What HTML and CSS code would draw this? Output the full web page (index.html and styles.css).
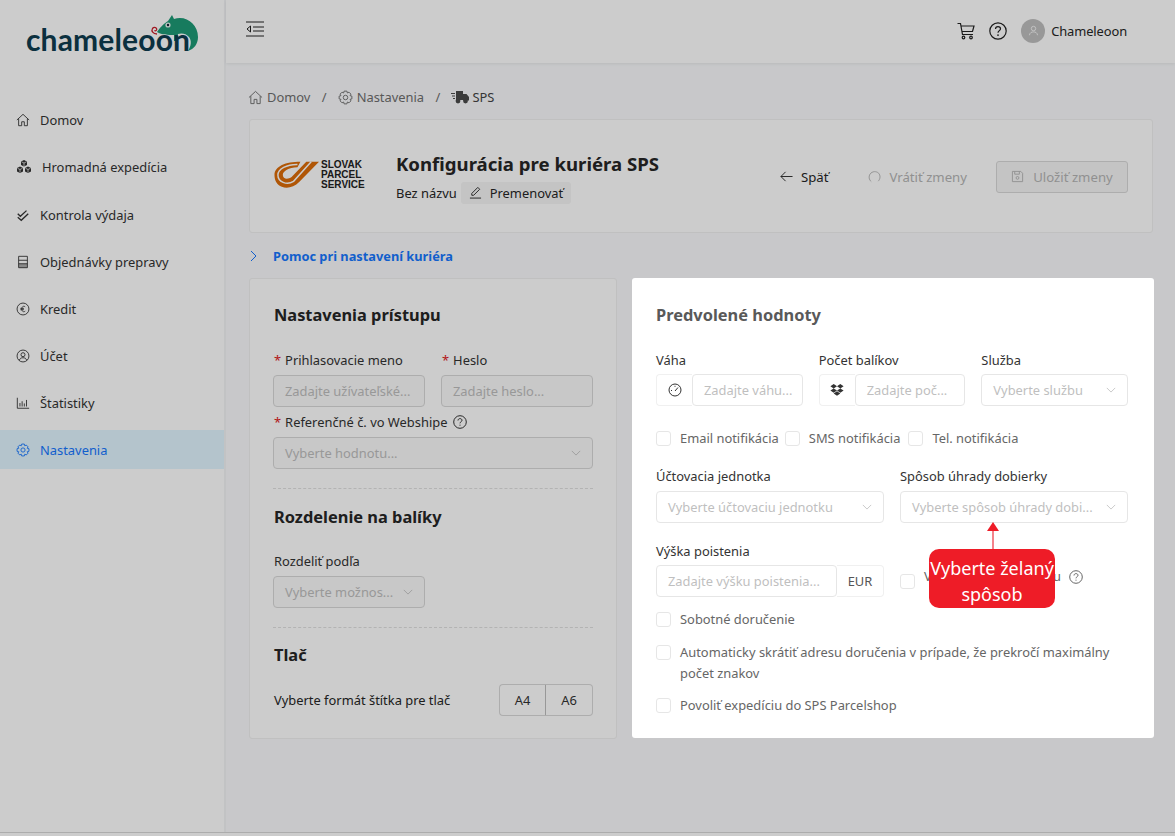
FILE: index.html
```html
<!DOCTYPE html>
<html lang="sk">
<head>
    <meta charset="UTF-8">
    <meta name="viewport" content="width=device-width, initial-scale=1.0">
    <title>Konfigurácia pre kuriéra SPS | Chameleoon</title>
    <link rel="stylesheet" href="styles.css">
</head>
<body>
    <div class="app">
        <aside class="sidebar">
            <div class="logo">
                <svg class="logo-mark" viewBox="0 0 49 40">
                    <g transform="translate(3)">
                        <path fill="#1d9a76" d="M4 18 C8 12 12 9 15 7 L19 1 L21 5 C33 1 45 10 45 23 C45 30 41 35 35 37 C38 32 39 27 36 23 C33 19 28 19 25 20 L24 27 L21 27 L21 21 C15 21 9 21 4 18Z"/>
                        <circle cx="15" cy="11" r="2.600" fill="#e9f5f0"/>
                        <circle cx="15" cy="11" r="1.200" fill="#123"/>
                    </g>
                    <path class="logo-tongue" d="M7 20 C3 20 1 17 2.500 14.500 C4 12.500 7.500 13.500 6.500 16 C6 17 5 17 4.500 16.300"/>
                </svg>
                <span class="logo-text">chameleoon</span>
            </div>
            <nav class="menu">
                <a class="menu-item">
                    <svg class="menu-icon" viewBox="0 0 16 16"><path d="M1 8 8 1.500 15 8M3 6.500V14.500H6.500V10H9.500V14.500H13V6.500"/></svg>
                    <span>Domov</span>
                </a>
                <a class="menu-item">
                    <svg class="menu-icon menu-icon-wide" viewBox="0 0 16 16">
                        <path class="solid" d="M8 1 11 2.500V6L8 7.500 5 6V2.500ZM4 7.500 7 9V12.500L4 14 1 12.500V9ZM12 7.500 15 9V12.500L12 14 9 12.500V9Z"/>
                        <path class="cube-lines" d="M5.500 2.800 8 4 10.500 2.800M8 4V7M1.500 9.300 4 10.500 6.500 9.300M4 10.500V13.500M9.500 9.300 12 10.500 14.500 9.300M12 10.500V13.500"/>
                    </svg>
                    <span>Hromadná expedícia</span>
                </a>
                <a class="menu-item">
                    <svg class="menu-icon" viewBox="0 0 16 16"><path stroke-width="1.500" d="M2 6.500 5 9.500 12 3M2 10.500 6 14 14 6.500"/></svg>
                    <span>Kontrola výdaja</span>
                </a>
                <a class="menu-item">
                    <svg class="menu-icon" viewBox="0 0 16 16"><path d="M3 1.500H13V14.500H3ZM3 6H13M3 10H13"/><path class="solid" d="M3 10H13V14.500H3Z" opacity="0.4"/></svg>
                    <span>Objednávky prepravy</span>
                </a>
                <a class="menu-item">
                    <svg class="menu-icon" viewBox="0 0 16 16"><circle cx="8" cy="8" r="6.800"/><path d="M10.500 5.500C8.500 4 6.500 5.500 6.500 8S8.500 12 10.500 10.500M5 7.300H9M5 8.800H9"/></svg>
                    <span>Kredit</span>
                </a>
                <a class="menu-item">
                    <svg class="menu-icon" viewBox="0 0 16 16"><circle cx="8" cy="8" r="6.800"/><circle cx="8" cy="6.500" r="2.300"/><path d="M3.800 13C4.500 10.500 6 10 8 10S11.500 10.500 12.200 13"/></svg>
                    <span>Účet</span>
                </a>
                <a class="menu-item">
                    <svg class="menu-icon" viewBox="0 0 16 16"><path d="M1.500 2V14H15M4.500 8V12M7 6V12M9.500 8.500V12M12 4.500V12"/></svg>
                    <span>Štatistiky</span>
                </a>
                <a class="menu-item active">
                    <svg class="menu-icon" viewBox="0 0 16 16"><circle cx="8" cy="8" r="2.400"/><path d="M6.500 1.200H9.500L10 3.200 11.700 2.300 13.800 4.400 12.800 6 14.800 6.500V9.500L12.800 10 13.800 11.600 11.700 13.700 10 12.800 9.500 14.800H6.500L6 12.800 4.300 13.700 2.200 11.600 3.200 10 1.200 9.500V6.500L3.200 6 2.200 4.400 4.300 2.300 6 3.200Z"/></svg>
                    <span>Nastavenia</span>
                </a>
            </nav>
        </aside>

        <div class="main">
            <header class="topbar">
                <svg class="collapse-icon" viewBox="0 0 18 16"><path d="M0 1H18M7 6H18M7 10H18M0 15H18M4.500 5 1 8 4.500 11Z"/></svg>
                <div class="topbar-right">
                    <svg class="top-icon" viewBox="0 0 18 18"><path d="M.5 1.500H3.500L5.500 12.500H16M4 4H17L15.500 9.500H5"/><circle cx="6.500" cy="15.500" r="1.300"/><circle cx="14" cy="15.500" r="1.300"/></svg>
                    <svg class="top-icon" viewBox="0 0 18 18"><circle cx="9" cy="9" r="8.200"/><path d="M6.500 7C6.500 5.300 7.800 4.600 9 4.600 10.400 4.600 11.500 5.500 11.500 6.800 11.500 8.600 9 8.700 9 10.800"/><path stroke-width="1.800" d="M9 12.600V13.800"/></svg>
                    <div class="user">
                        <span class="avatar">
                            <svg viewBox="0 0 14 14"><circle cx="7" cy="4.500" r="2.800"/><path d="M1.800 13C2.300 9.800 4.500 8.800 7 8.800S11.700 9.800 12.200 13"/></svg>
                        </span>
                        <span>Chameleoon</span>
                    </div>
                </div>
            </header>

            <div class="content">
                <div class="breadcrumb">
                    <svg class="crumb-icon" viewBox="0 0 16 16"><path d="M1 8 8 1.500 15 8M3 6.500V14.500H6.500V10H9.500V14.500H13V6.500"/></svg>
                    <span>Domov</span>
                    <span class="crumb-sep">/</span>
                    <svg class="crumb-icon" viewBox="0 0 16 16"><circle cx="8" cy="8" r="2.400"/><path d="M6.500 1.200H9.500L10 3.200 11.700 2.300 13.800 4.400 12.800 6 14.800 6.500V9.500L12.800 10 13.800 11.600 11.700 13.700 10 12.800 9.500 14.800H6.500L6 12.800 4.300 13.700 2.200 11.600 3.200 10 1.200 9.500V6.500L3.200 6 2.200 4.400 4.300 2.300 6 3.200Z"/></svg>
                    <span>Nastavenia</span>
                    <span class="crumb-sep">/</span>
                    <svg class="crumb-truck" viewBox="0 0 18 14"><path d="M5 1H12V10H5ZM12 4H15.500L18 7V10.500H12Z"/><path d="M0 3H4V4H0ZM1 5.500H4V6.500H1ZM2 8H4V9H2Z"/><circle cx="7" cy="11" r="2.400"/><circle cx="14.500" cy="11" r="2.400"/></svg>
                    <span class="crumb-current">SPS</span>
                </div>

                <section class="config-card">
                    <div class="sps-logo">
                        <svg class="sps-mark" viewBox="0 0 46 28">
                            <path fill="#dc6c08" d="M.5 14 C.5 5 12 .5 27 .5 L24 6 C15 6 9 10 9 14 C9 18 14 19 18 16 L33 .5 L46 .5 L26 21 C20 27 13 28 8 26 C3 24 .5 20 .5 14Z"/>
                            <path class="sps-line" d="M24 3.200 C13 3 4 8 4 14 C4 21 13 25 20 20.500 L38 .5"/>
                        </svg>
                        <div class="sps-name">SLOVAK<br>PARCEL<br>SERVICE</div>
                    </div>
                    <div class="config-title">
                        <h1>Konfigurácia pre kuriéra SPS</h1>
                        <div class="config-sub">
                            <span>Bez názvu</span>
                            <span class="rename">
                                <svg viewBox="0 0 14 14"><path d="M1 13H13M3 10V8L9.500 1.500 11.500 3.500 5 10Z"/></svg>
                                Premenovať
                            </span>
                        </div>
                    </div>
                    <div class="config-actions">
                        <span class="action action-back">
                            <svg viewBox="0 0 14 12"><path d="M13.500 6H1M6 1 1 6 6 11"/></svg>
                            Späť
                        </span>
                        <span class="action action-muted">
                            <svg viewBox="0 0 14 14"><path d="M3.500 12.500C1 10.500.500 7 2.300 4.300 4.500 1.200 9 1 11.500 3.500 13.500 5.700 13.500 9.500 11 12"/></svg>
                            Vrátiť zmeny
                        </span>
                        <span class="save-btn">
                            <svg viewBox="0 0 14 14"><path d="M1.500 1.500H10.500L12.500 3.500V12.500H1.500ZM4 1.500V4.500H9V1.500"/><circle cx="7" cy="8.500" r="1.500"/></svg>
                            Uložiť zmeny
                        </span>
                    </div>
                </section>

                <div class="help-row">
                    <svg viewBox="0 0 7 12"><path d="M1 1 6 6 1 11"/></svg>
                    <span>Pomoc pri nastavení kuriéra</span>
                </div>

                <div class="columns">
                    <section class="card card-access">
                        <h2>Nastavenia prístupu</h2>
                        <div class="field-grid two">
                            <div class="field">
                                <label><i>*</i> Prihlasovacie meno</label>
                                <div class="control">Zadajte užívateľské...</div>
                            </div>
                            <div class="field">
                                <label><i>*</i> Heslo</label>
                                <div class="control">Zadajte heslo...</div>
                            </div>
                        </div>
                        <div class="field field-ref">
                            <label>
                                <i>*</i> Referenčné č. vo Webshipe
                                <svg class="q-icon" viewBox="0 0 14 14"><circle cx="7" cy="7" r="6.300"/><path d="M5 5.500C5 4.300 6 3.600 7 3.600 8.100 3.600 9 4.300 9 5.300 9 6.700 7 6.800 7 8.300"/><path d="M7 9.700V10.700"/></svg>
                            </label>
                            <div class="control select">
                                <span>Vyberte hodnotu...</span>
                                <svg class="chev" viewBox="0 0 12 7"><path d="M1 1 6 6 11 1"/></svg>
                            </div>
                        </div>
                        <hr class="divider">
                        <h2>Rozdelenie na balíky</h2>
                        <div class="field-grid two split-grid">
                            <div class="field">
                                <label>Rozdeliť podľa</label>
                                <div class="control select">
                                    <span>Vyberte možnos...</span>
                                    <svg class="chev" viewBox="0 0 12 7"><path d="M1 1 6 6 11 1"/></svg>
                                </div>
                            </div>
                        </div>
                        <hr class="divider">
                        <h2 class="print-title">Tlač</h2>
                        <div class="print-row">
                            <span>Vyberte formát štítka pre tlač</span>
                            <div class="format-group">
                                <span class="format">A4</span>
                                <span class="format">A6</span>
                            </div>
                        </div>
                    </section>

                    <section class="card card-defaults">
                        <h2>Predvolené hodnoty</h2>
                        <div class="field-grid three">
                            <div class="field">
                                <label>Váha</label>
                                <div class="input-group">
                                    <span class="addon addon-icon">
                                        <svg viewBox="0 0 14 14"><circle cx="7" cy="7" r="6"/><path d="M7 8 10 4.500M3 7.500H4M7 2.800V3.800"/></svg>
                                    </span>
                                    <div class="control">Zadajte váhu...</div>
                                </div>
                            </div>
                            <div class="field">
                                <label>Počet balíkov</label>
                                <div class="input-group">
                                    <span class="addon addon-icon">
                                        <svg viewBox="0 0 14 14"><path class="solid" d="M3.700 1 7 3.200 3.700 5.400.400 3.200ZM10.300 1 13.600 3.200 10.300 5.400 7 3.200ZM3.700 5.400 7 7.600 3.700 9.800.400 7.600ZM10.300 5.400 13.600 7.600 10.300 9.800 7 7.600ZM3.700 10.500 7 8.300 10.300 10.500 7 12.800Z"/></svg>
                                    </span>
                                    <div class="control">Zadajte poč...</div>
                                </div>
                            </div>
                            <div class="field">
                                <label>Služba</label>
                                <div class="control select">
                                    <span>Vyberte službu</span>
                                    <svg class="chev" viewBox="0 0 12 7"><path d="M1 1 6 6 11 1"/></svg>
                                </div>
                            </div>
                        </div>

                        <div class="check-row">
                            <label class="check"><span class="box"></span>Email notifikácia</label>
                            <label class="check"><span class="box"></span>SMS notifikácia</label>
                            <label class="check"><span class="box"></span>Tel. notifikácia</label>
                        </div>

                        <div class="field-grid two-wide billing">
                            <div class="field">
                                <label>Účtovacia jednotka</label>
                                <div class="control select">
                                    <span>Vyberte účtovaciu jednotku</span>
                                    <svg class="chev" viewBox="0 0 12 7"><path d="M1 1 6 6 11 1"/></svg>
                                </div>
                            </div>
                            <div class="field">
                                <label>Spôsob úhrady dobierky</label>
                                <div class="control select">
                                    <span>Vyberte spôsob úhrady dobi...</span>
                                    <svg class="chev" viewBox="0 0 12 7"><path d="M1 1 6 6 11 1"/></svg>
                                </div>
                            </div>
                        </div>

                        <div class="field-grid two-wide insurance">
                            <div class="field">
                                <label>Výška poistenia</label>
                                <div class="input-group">
                                    <div class="control">Zadajte výšku poistenia...</div>
                                    <span class="addon addon-text">EUR</span>
                                </div>
                            </div>
                            <label class="check check-end">
                                <span class="box"></span>
                                <span class="check-end-text">Vyžiadať poistné balíku</span>
                                <svg class="q-icon q-muted" viewBox="0 0 14 14"><circle cx="7" cy="7" r="6.300"/><path d="M5 5.500C5 4.300 6 3.600 7 3.600 8.100 3.600 9 4.300 9 5.300 9 6.700 7 6.800 7 8.300"/><path d="M7 9.700V10.700"/></svg>
                            </label>
                        </div>

                        <div class="check-list">
                            <label class="check"><span class="box"></span>Sobotné doručenie</label>
                            <label class="check"><span class="box"></span><span>Automaticky skrátiť adresu doručenia v prípade, že prekročí maximálny počet znakov</span></label>
                            <label class="check"><span class="box"></span>Povoliť expedíciu do SPS Parcelshop</label>
                        </div>

                        <div class="tour-tip">
                            <span class="tour-arrow"></span>
                            <div class="tour-text">Vyberte želaný spôsob</div>
                        </div>
                    </section>
                </div>
            </div>
        </div>
    </div>
    <div class="tour-mask"></div>
</body>
</html>
```

FILE: styles.css
```css
* {
    margin: 0;
    padding: 0;
    box-sizing: border-box;
}

html, body {
    height: 100%;
    overflow: hidden;
}

body {
    background: #ffffff;
    color: #262626;
    font-family: "Noto Sans", "Open Sans", sans-serif;
    font-size: 12.9px;
    line-height: 20px;
}

svg {
    display: block;
    flex: none;
    fill: none;
    stroke: currentColor;
    stroke-width: 1;
}

svg .solid {
    fill: currentColor;
    stroke: none;
}

.app {
    display: flex;
    height: 833px;
    border-bottom: 1px solid #d8d8d8;
}

.tour-mask {
    position: fixed;
    inset: 0;
    z-index: 10;
    background: rgba(0, 0, 0, 0.2);
}

/* sidebar */
.sidebar {
    width: 226px;
    flex: none;
    background: #ffffff;
    border-right: 2px solid #f3f4f6;
}

.logo {
    position: relative;
    height: 100px;
}

.logo-text {
    position: absolute;
    left: 26px;
    top: 18px;
    font-family: "Lato", sans-serif;
    font-size: 30px;
    line-height: 42px;
    font-weight: 700;
    letter-spacing: 0.15px;
    color: #0e3c4f;
}

.logo-mark {
    position: absolute;
    left: 150px;
    top: 14px;
    width: 49px;
    height: 40px;
    stroke: none;
}

.logo-tongue {
    fill: none;
    stroke: #c8202c;
    stroke-width: 1.3;
}

.menu {
    display: flex;
    flex-direction: column;
    gap: 8px;
}

.menu-item {
    display: flex;
    align-items: center;
    gap: 10px;
    height: 39px;
    padding-left: 16px;
    color: #333333;
}

.menu-item:nth-child(2) {
    margin-bottom: 1px;
}

.menu-icon {
    width: 14px;
    height: 14px;
}

.menu-icon-wide {
    width: 16px;
    height: 16px;
}

.cube-lines {
    stroke: #ffffff;
    stroke-width: 0.7;
}

.menu-item.active {
    background: #e1f5ff;
    color: #1677ff;
}

/* top bar */
.main {
    flex: 1;
    min-width: 0;
    background: #fafbfd;
}

.topbar {
    display: flex;
    align-items: center;
    justify-content: space-between;
    height: 63px;
    padding: 0 48px 2px 20px;
    background: #ffffff;
    box-shadow: 0 1px 3px rgba(0, 0, 0, 0.08);
}

.collapse-icon {
    width: 18px;
    height: 16px;
    margin-top: -3px;
    color: #222222;
}

.topbar-right {
    display: flex;
    align-items: center;
    gap: 14px;
}

.top-icon {
    width: 18px;
    height: 18px;
    color: #222222;
    stroke-width: 1.2;
}

.user {
    display: flex;
    align-items: center;
    gap: 6px;
    letter-spacing: -0.1px;
}

.avatar {
    display: flex;
    align-items: center;
    justify-content: center;
    width: 24px;
    height: 24px;
    border-radius: 50%;
    background: #bfbfbf;
    color: #ffffff;
}

.avatar svg {
    width: 11px;
    height: 11px;
}

/* page content */
.content {
    padding: 24px 21px 0 22px;
}

.breadcrumb {
    display: flex;
    align-items: center;
    height: 20px;
    color: #6f6f6f;
    margin-bottom: 12px;
}

.crumb-icon {
    width: 15px;
    height: 15px;
    margin-right: 4px;
}

.crumb-truck {
    width: 18px;
    height: 14px;
    margin-right: 3px;
    stroke: none;
    fill: #4a4a4a;
}

.crumb-sep {
    margin: 0 11px 0 11.5px;
}

.crumb-current {
    color: #444444;
}

.config-card {
    display: flex;
    align-items: center;
    height: 114px;
    margin-left: 1px;
    margin-right: 1px;
    padding: 0 24px;
    background: #ffffff;
    border: 1px solid #f0f0f0;
    border-radius: 3px;
}

.sps-logo {
    display: flex;
    align-items: center;
    gap: 2px;
    width: 122px;
    margin-top: -2px;
}

.sps-mark {
    width: 45px;
    height: 28px;
    stroke: none;
}

.sps-line {
    fill: none;
    stroke: #ffffff;
    stroke-width: 1.5;
}

.sps-name {
    font-family: "Liberation Sans", sans-serif;
    font-size: 10px;
    line-height: 10px;
    font-weight: 700;
    color: #222222;
}

.config-title {
    margin-top: 2px;
}

.config-title h1 {
    font-size: 18.6px;
    line-height: 26px;
    font-weight: 700;
    color: #262626;
}

.config-sub {
    display: flex;
    align-items: center;
    gap: 4px;
    margin-top: 5px;
}

.rename {
    display: flex;
    align-items: center;
    gap: 8px;
    height: 22px;
    padding: 0 8px;
    background: #f6f6f6;
    border-radius: 3px;
}

.rename svg {
    width: 13px;
    height: 13px;
}

.config-actions {
    display: flex;
    align-items: center;
    margin-left: auto;
    margin-top: 1px;
    font-size: 13.2px;
}

.action {
    display: flex;
    align-items: center;
    gap: 8px;
}

.action svg {
    width: 13px;
    height: 13px;
}

.action-muted {
    margin-left: 40px;
    color: #b5b5b5;
}

.save-btn {
    display: flex;
    align-items: center;
    justify-content: center;
    gap: 9px;
    width: 132px;
    height: 32px;
    margin-left: 29px;
    color: #b5b5b5;
    background: #f5f5f5;
    border: 1px solid #d9d9d9;
    border-radius: 3px;
}

.save-btn svg {
    width: 13px;
    height: 13px;
}

.help-row {
    display: flex;
    align-items: center;
    gap: 16px;
    height: 20px;
    margin: 13px 0 12px 2px;
    color: #1677ff;
    font-weight: 700;
    font-size: 12.8px;
}

.help-row svg {
    width: 7px;
    height: 12px;
}

/* form cards */
.columns {
    display: flex;
    gap: 15px;
    align-items: flex-start;
    margin-left: 1px;
    margin-right: -2px;
}

.card {
    position: relative;
    background: #ffffff;
    border-radius: 3px;
}

.card-access {
    width: 368px;
    height: 461px;
    border: 1px solid #f0f0f0;
    padding: 23px 23px;
}

.card-defaults {
    z-index: 11;
    width: 522px;
    height: 460px;
    padding: 24px 26px 24px 24px;
}

.card h2 {
    font-size: 16.4px;
    line-height: 24px;
    font-weight: 700;
    color: #262626;
    margin-top: 1px;
}

.card-access h2,
.card-access .field label,
.print-row > span {
    margin-left: 1px;
}

.card .print-title {
    margin-top: -1px;
}

.card-defaults h2 {
    color: #595959;
}

.field-grid {
    display: grid;
    gap: 16px;
    margin-top: 23px;
}

.split-grid {
    margin-top: 22px;
}

.field-grid.two {
    grid-template-columns: 1fr 1fr;
}

.field-grid.three {
    grid-template-columns: repeat(3, 1fr);
}

.field-grid.two-wide {
    grid-template-columns: 1fr 1fr;
    margin-top: 18px;
}

.field-grid.billing {
    margin-top: 17px;
}

.field {
    min-width: 0;
}

.field label {
    display: flex;
    align-items: center;
    gap: 4px;
    height: 20px;
    margin-bottom: 5px;
    color: #333333;
}

.three .field label,
.insurance .field label {
    margin-bottom: 4px;
}

.field label i {
    color: #e0201c;
    font-style: normal;
}

.field-ref {
    margin-top: 5px;
}

.q-icon {
    width: 14px;
    height: 14px;
    margin-left: 2px;
}

.q-muted {
    color: #666666;
    margin: -4px 0 0 8px;
}

.control {
    flex: 1;
    min-width: 0;
    height: 32px;
    padding: 0 11px;
    line-height: 30px;
    color: #bfbfbf;
    white-space: nowrap;
    overflow: hidden;
    background: #ffffff;
    border: 1px solid #e6e6e6;
    border-radius: 4px;
}

.card-access .control {
    background: #fafafa;
    border-color: #d9d9d9;
}

.select {
    display: flex;
    align-items: center;
    justify-content: space-between;
}

.chev {
    width: 10px;
    height: 6px;
    color: #bfbfbf;
}

.input-group {
    display: flex;
}

.addon {
    display: flex;
    align-items: center;
    justify-content: center;
    height: 32px;
    background: #ffffff;
    border: 1px solid #f0f0f0;
}

.addon-icon {
    flex: none;
    width: 36px;
    border-right: none;
    border-radius: 4px 0 0 4px;
    color: #333333;
}

.addon-icon svg {
    width: 14px;
    height: 14px;
}

.addon-text {
    flex: none;
    width: 47px;
    border-left: none;
    border-radius: 0 4px 4px 0;
    color: #555555;
}

.check {
    display: flex;
    align-items: flex-start;
    color: #666666;
    line-height: 21px;
}

.box {
    flex: none;
    width: 15px;
    height: 15px;
    margin: 3px 9px 0 0;
    background: #ffffff;
    border: 1px solid #e6e6e6;
    border-radius: 3px;
}

.check-row {
    display: flex;
    gap: 6px;
    margin-top: 22px;
}

.check-row .check:last-child {
    margin-left: 2px;
}

.check-end {
    align-self: end;
    height: 16px;
    margin-bottom: 7px;
    white-space: nowrap;
    letter-spacing: -0.1px;
}

.check-end .box {
    margin-top: 0;
}

.check-end-text {
    margin-top: -8px;
}

.check-list {
    display: flex;
    flex-direction: column;
    gap: 12px;
    margin-top: 12px;
}

.check-list .check:last-child {
    margin-top: -1px;
}

/* tour step */
.tour-tip {
    position: absolute;
    left: 297px;
    top: 271px;
    width: 126px;
    height: 59px;
    background: #ee1c27;
    border-radius: 10px;
}

.tour-arrow {
    position: absolute;
    left: 63px;
    top: -20px;
    width: 2px;
    height: 20px;
    background: #f4838b;
}

.tour-arrow::before {
    content: "";
    position: absolute;
    left: -5px;
    top: -7px;
    border-left: 6px solid transparent;
    border-right: 6px solid transparent;
    border-bottom: 9px solid #ee1c27;
}

.tour-text {
    color: #ffffff;
    font-size: 18px;
    line-height: 26px;
    text-align: center;
    padding-top: 6px;
}

/* print format */
.print-row {
    display: flex;
    align-items: center;
    justify-content: space-between;
    margin-top: 17px;
}

.format-group {
    display: flex;
}

.format {
    width: 47px;
    height: 32px;
    line-height: 30px;
    text-align: center;
    border: 1px solid #d9d9d9;
    color: #333333;
}

.format:first-child {
    border-radius: 4px 0 0 4px;
    border-right: 1px solid #bfbfbf;
}

.format:last-child {
    border-left: none;
    border-radius: 0 4px 4px 0;
}

.divider {
    border: none;
    border-top: 1px dashed #e0e0e0;
    margin: 19px 0 16px;
}
```
